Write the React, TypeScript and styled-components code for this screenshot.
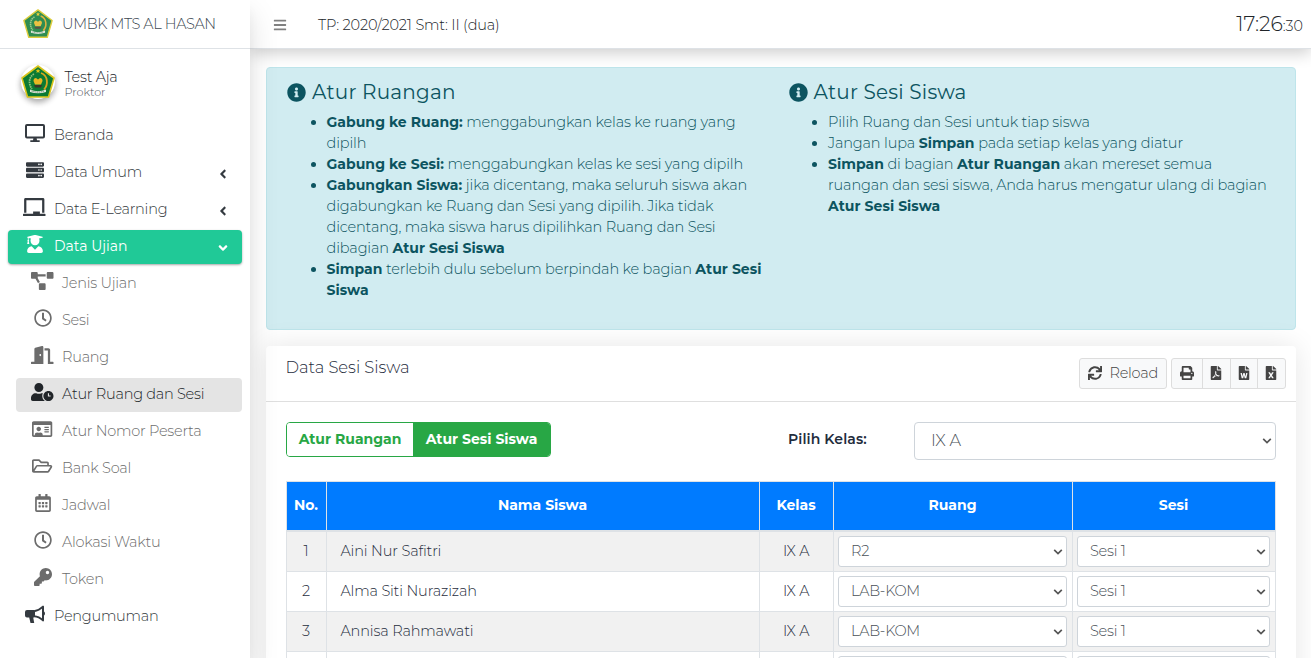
import React from 'react';
import styled, { createGlobalStyle, css } from 'styled-components';
import {
  FaServer, FaChalkboard, FaUserGraduate, FaProjectDiagram, FaRegClock, FaDoorOpen, FaUserClock,
  FaRegIdCard, FaRegFolderOpen, FaRegCalendarAlt, FaKey, FaInfoCircle, FaSync,
  FaPrint, FaFilePdf, FaFileWord, FaFileExcel, FaBars, FaAngleLeft, FaAngleDown,
} from 'react-icons/fa';

const Global = createGlobalStyle`
  *, *::before, *::after { box-sizing: border-box; }
  html, body { margin: 0; height: 100%; overflow: hidden; }
  body {
    font-family: Montserrat, "Open Sans", "Liberation Sans", sans-serif;
    font-size: 14.5px; font-weight: 300; line-height: 21px; letter-spacing: -0.25px;
    color: #212529; background: #fff;
  }
  svg { display: block; }
`;

const Page = styled.div`
  display: flex;
  height: 100vh;
  overflow: hidden;
`;

const Sidebar = styled.aside`
  flex: 0 0 250px;
  position: relative;
  z-index: 3;
  background: #fff;
  box-shadow: 0 14px 28px rgba(0, 0, 0, 0.13), 0 10px 10px rgba(0, 0, 0, 0.04);
`;

const Brand = styled.div`
  display: flex;
  align-items: center;
  height: 49px;
  padding-left: 23px;
  gap: 9px;
  border-bottom: 1px solid #dee2e6;
  color: #3d4852;
  letter-spacing: -0.36px;
  svg { opacity: 0.85; }
`;

const UserPanel = styled.div`
  display: flex;
  height: 70px;
  padding: 16px 0 0 20.5px;
  gap: 10px;
`;

const Avatar = styled.div`
  width: 34px;
  height: 34px;
  border-radius: 50%;
  background: #fff;
  box-shadow: 0 3px 6px rgba(0, 0, 0, 0.16), 0 3px 6px rgba(0, 0, 0, 0.23);
`;

const UserText = styled.div`
  padding-top: 4px;
  line-height: 16px;
  color: #212529;
  small { display: block; font-size: 11.2px; line-height: 14px; letter-spacing: 0; color: #495057; }
`;

const Nav = styled.nav`
  display: flex;
  flex-direction: column;
  gap: 3px;
  padding: 0 8px;
`;

const NavItem = styled.a<{ $sub?: boolean; $open?: boolean; $current?: boolean }>`
  display: flex;
  align-items: center;
  height: 34px;
  margin-left: ${p => (p.$sub ? 8 : 0)}px;
  padding: 0 15px 0 13px;
  border-radius: 4px;
  color: ${p => (p.$sub ? '#6c6c6c' : '#343a40')};
  ${p => p.$open && css`
    background: #20c997;
    color: #fff;
    font-weight: 400;
    font-size: 14px;
    letter-spacing: 0;
    box-shadow: 0 1px 3px rgba(0, 0, 0, 0.12), 0 1px 2px rgba(0, 0, 0, 0.24);
  `}
  ${p => p.$current && css`background: #e4e4e4; color: #212529;`}
`;

const NavIcon = styled.span<{ $w: number }>`
  display: flex;
  justify-content: center;
  width: 27px;
  margin: 0 6px 6px 0;
  svg { height: 18px; width: ${p => p.$w}px; flex: none; }
`;

const NavLabel = styled.span`
  flex: 1;
  padding-bottom: 1px;
`;

const NavArrow = styled.span`
  padding-top: 2px;
  margin-right: -2.5px;
  svg { width: 14px; height: 14px; }
`;

const Main = styled.div`
  flex: 1;
  min-width: 0;
  display: flex;
  flex-direction: column;
`;

const TopBar = styled.header`
  flex: none;
  position: relative;
  z-index: 2;
  display: flex;
  align-items: center;
  height: 49px;
  padding: 0 8px 0 23px;
  background: #fff;
  border-bottom: 1px solid #dee2e6;
  box-shadow: 0 4px 16px rgba(0, 0, 0, 0.2);
  > svg { width: 14px; height: 14px; margin-top: 1px; color: #808080; }
`;

const Period = styled.span`
  margin-left: 31px;
  padding-top: 3px;
  letter-spacing: -0.15px;
`;

const Clock = styled.div`
  margin-left: auto;
  padding-top: 2px;
  font-size: 20.4px;
  line-height: 30px;
  letter-spacing: 0;
  small { font-size: 14.3px; }
`;

const Content = styled.main`
  padding: 18px 15px 0 16px;
`;

const InfoBox = styled.section`
  display: grid;
  grid-template-columns: 486.5px 1fr;
  gap: 15px;
  height: 263px;
  padding: 12px 20px;
  border: 1px solid #bee5eb;
  border-radius: 4px;
  background: #d1ecf1;
  color: #0c5460;
`;

const InfoTitle = styled.h5`
  display: flex;
  align-items: center;
  gap: 6px;
  margin: 0 0 8px;
  font-size: 20px;
  font-weight: 400;
  line-height: 24px;
  letter-spacing: 0.2px;
  svg { width: 19px; height: 19px; }
`;

const InfoList = styled.ul`
  margin: 0;
  padding-left: 39.5px;
  letter-spacing: -0.16px;
  b { font-size: 14px; font-weight: 700; letter-spacing: 0.04px; }
`;

const Card = styled.section`
  margin-top: 16px;
  height: 500px;
  border-radius: 4px;
  background: #fff;
  box-shadow: 0 0 28px rgba(0, 0, 0, 0.1);
`;

const CardHeader = styled.div`
  display: flex;
  justify-content: space-between;
  height: 56px;
  padding: 12px 10px 12px 19.5px;
  border-bottom: 1px solid #dfdfdf;
`;

const CardTitle = styled.h3`
  margin: 0;
  font-size: 16.4px;
  font-weight: 300;
  line-height: 19px;
  letter-spacing: -0.03px;
  color: #1f2d3d;
`;

const Tools = styled.div`
  display: flex;
  gap: 4px;
`;

const ToolGroup = styled.div`
  display: flex;
  height: 31px;
  border: 1px solid #ddd;
  border-radius: 3px;
  background: #f8f9fa;
  color: #444;
`;

const ToolButton = styled.button<{ $w: number }>`
  display: flex;
  align-items: center;
  justify-content: center;
  gap: 7.5px;
  width: ${p => p.$w}px;
  padding: 0 0 1px;
  border: 0;
  background: none;
  color: inherit;
  font: inherit;
  letter-spacing: inherit;
  & + & { border-left: 1px solid #ddd; padding-right: 1px; }
  svg { width: 14px; height: 14px; }
`;

const CardBody = styled.div`
  padding: 20px;
`;

const Controls = styled.div`
  display: flex;
  height: 38px;
  margin-bottom: 21px;
`;

const Switch = styled.div`
  display: flex;
  width: 265px;
  height: 35px;
  border: 1px solid #28a745;
  border-radius: 4px;
  overflow: hidden;
`;

const SwitchButton = styled.button<{ $on?: boolean }>`
  flex: ${p => (p.$on ? '1' : '0 0 126px')};
  padding: 0 0 1px;
  border: 0;
  font: inherit;
  font-size: 14px;
  font-weight: 700;
  white-space: nowrap;
  background: ${p => (p.$on ? '#28a745' : '#fff')};
  color: ${p => (p.$on ? '#fff' : '#28a745')};
`;

const ClassLabel = styled.label`
  width: 126px;
  margin-left: 237px;
  padding-top: 7px;
  font-size: 14px;
  font-weight: 600;
  letter-spacing: 0.1px;
  color: #1f2d3d;
`;

const SelectBox = styled.div<{ $w: number }>`
  position: relative;
  width: ${p => p.$w}px;
  svg {
    position: absolute;
    right: 4px;
    top: 50%;
    margin-top: -3px;
    width: 10px;
    height: 6px;
    pointer-events: none;
  }
`;

const Select = styled.select<{ $large?: boolean }>`
  appearance: none;
  display: block;
  width: 100%;
  height: ${p => (p.$large ? 38 : 31)}px;
  padding: ${p => (p.$large ? '0 16px 2px' : '0 12px 2px')};
  border: 1px solid #ced4da;
  border-radius: ${p => (p.$large ? 4 : 3)}px;
  background: #fff;
  color: #495057;
  font-family: inherit;
  font-size: ${p => (p.$large ? 16.4 : 14.5)}px;
  font-weight: 300;
  letter-spacing: -0.25px;
`;

const Table = styled.table`
  width: 990px;
  table-layout: fixed;
  border-collapse: separate;
  border-spacing: 0;
  border-top: 1px solid #dee2e6;
  border-left: 1px solid #dee2e6;
  color: #1f2d3d;
`;

const HeadCell = styled.th<{ $w: number }>`
  width: ${p => p.$w}px;
  height: 50px;
  padding: 0 1px 1px 0;
  border-right: 1px solid #dee2e6;
  border-bottom: 2px solid #dee2e6;
  background: #007bff;
  color: #fff;
  font-size: 14px;
  font-weight: 700;
  letter-spacing: 0;
`;

const Row = styled.tr`
  &:nth-child(odd) { background: #f1f1f1; }
`;

const Cell = styled.td<{ $name?: boolean }>`
  height: 40px;
  padding: ${p => (p.$name ? '0 13.5px 1px' : '0 5px 0 4px')};
  border-right: 1px solid #dee2e6;
  border-bottom: 1px solid #dee2e6;
  text-align: ${p => (p.$name ? 'left' : 'center')};
  letter-spacing: ${p => (p.$name ? -0.14 : -0.25)}px;
`;

const Dropdown = ({ value, width, large }: { value: string; width: number; large?: boolean }) => (
  <SelectBox $w={width}>
    <Select $large={large}><option>{value}</option></Select>
    <svg viewBox="0 0 10 6"><path d="M1.200 .9 5 4.600 8.800 .9" fill="none" stroke="#555" strokeWidth="1.700" /></svg>
  </SelectBox>
);

const Emblem = ({ size }: { size: number }) => (
  <svg width={size} height={size} viewBox="0 0 34 34">
    <path d="M17 1 33 13 27.5 32H6.5L1 13Z" fill="#0b7a33" stroke="#d9c51c" strokeWidth="1.6" strokeLinejoin="round" />
    <path d="M13 9C8 11.500 7 19 11 24" fill="none" stroke="#8fc07c" strokeWidth="1.800" strokeDasharray="1.600 .7" />
    <path d="M20 8C27 10.500 27.500 19.500 23 24.500" fill="none" stroke="#d9a520" strokeWidth="1.800" />
    <path d="M17 3.500l.7 1.700h1.700l-1.300 1.100.5 1.700-1.600-1-1.600 1 .5-1.700-1.300-1.100h1.700Z" fill="#e6c619" />
    <path d="M12.500 16q0-3 2.500-3l2 1.500 2-1.500q2.500 0 2.500 3l-1.500 3.500h-6Z" fill="#e8b722" />
    <path d="M13 20h8l-1 2.500h-6Z" fill="#3c3428" />
    <path d="M9 24.500q8 3.500 16 0v2.500q-8 2.500-16 0Z" fill="#dfe8da" />
    <path d="M10.500 26q6.500 2.200 13 0" fill="none" stroke="#4f7b55" strokeWidth=".8" strokeDasharray="1.200 .7" />
  </svg>
);

const Monitor = () => (
  <svg viewBox="0 0 20 18" fill="none">
    <rect x="1" y="1" width="18" height="12.500" rx="1" stroke="currentColor" strokeWidth="2" />
    <path d="M8.500 13.500h3l.5 2.700h2.700V18H5.300v-1.800H8Z" fill="currentColor" />
  </svg>
);

const Megaphone = () => (
  <svg viewBox="0 0 20 18">
    <path d="M2 5h7v7.500H8.200L9.200 18H5.500L4.200 12.500H2Q0 12.500 0 10.500V7Q0 5 2 5Z" fill="currentColor" />
    <path d="M9 6.200Q14 5.500 18 1.600V15.400Q14 11.500 9 11.200Z" fill="none" stroke="currentColor" strokeWidth="2" strokeLinejoin="round" />
    <path d="M19 6.500q1 .6 1 2t-1 2Z" fill="currentColor" />
  </svg>
);

type Item = { icon: React.ReactNode; label: string; w?: number; sub?: boolean; open?: boolean; current?: boolean; arrow?: boolean };

const items: Item[] = [
  { icon: <Monitor />, label: 'Beranda', w: 20 },
  { icon: <FaServer />, label: 'Data Umum', arrow: true },
  { icon: <FaChalkboard />, label: 'Data E-Learning', w: 22.5, arrow: true },
  { icon: <FaUserGraduate />, label: 'Data Ujian', open: true },
  { icon: <FaProjectDiagram />, label: 'Jenis Ujian', w: 22.5, sub: true },
  { icon: <FaRegClock />, label: 'Sesi', sub: true },
  { icon: <FaDoorOpen />, label: 'Ruang', w: 22.5, sub: true },
  { icon: <FaUserClock />, label: 'Atur Ruang dan Sesi', w: 22.5, sub: true, current: true },
  { icon: <FaRegIdCard />, label: 'Atur Nomor Peserta', w: 20.25, sub: true },
  { icon: <FaRegFolderOpen />, label: 'Bank Soal', w: 20.25, sub: true },
  { icon: <FaRegCalendarAlt />, label: 'Jadwal', sub: true },
  { icon: <FaRegClock />, label: 'Alokasi Waktu', sub: true },
  { icon: <FaKey />, label: 'Token', sub: true },
  { icon: <Megaphone />, label: 'Pengumuman', w: 20 },
];

const students = [
  { name: 'Aini Nur Safitri', room: 'R2' },
  { name: 'Alma Siti Nurazizah', room: 'LAB-KOM' },
  { name: 'Annisa Rahmawati', room: 'LAB-KOM' },
  { name: '', room: '' },
];

export default function App() {
  return (
    <Page>
      <Global />
      <Sidebar>
        <Brand><Emblem size={30} />UMBK MTS AL HASAN</Brand>
        <UserPanel>
          <Avatar><Emblem size={34} /></Avatar>
          <UserText>Test Aja<small>Proktor</small></UserText>
        </UserPanel>
        <Nav>
          {items.map(it => (
            <NavItem key={it.label} $sub={it.sub} $open={it.open} $current={it.current}>
              <NavIcon $w={it.w ?? 18}>{it.icon}</NavIcon>
              <NavLabel>{it.label}</NavLabel>
              {it.arrow && <NavArrow><FaAngleLeft /></NavArrow>}
              {it.open && <NavArrow><FaAngleDown /></NavArrow>}
            </NavItem>
          ))}
        </Nav>
      </Sidebar>
      <Main>
        <TopBar>
          <FaBars />
          <Period>TP: 2020/2021 Smt: II (dua)</Period>
          <Clock>17:26<small>:30</small></Clock>
        </TopBar>
        <Content>
          <InfoBox>
            <div>
              <InfoTitle><FaInfoCircle />Atur Ruangan</InfoTitle>
              <InfoList>
                <li><b>Gabung ke Ruang:</b> menggabungkan kelas ke ruang yang dipilh</li>
                <li><b>Gabung ke Sesi:</b> menggabungkan kelas ke sesi yang dipilh</li>
                <li><b>Gabungkan Siswa:</b> jika dicentang, maka seluruh siswa akan digabungkan ke Ruang dan Sesi yang dipilih. Jika tidak dicentang, maka siswa harus dipilihkan Ruang dan Sesi dibagian <b>Atur Sesi Siswa</b></li>
                <li><b>Simpan</b> terlebih dulu sebelum berpindah ke bagian <b>Atur Sesi Siswa</b></li>
              </InfoList>
            </div>
            <div>
              <InfoTitle><FaInfoCircle />Atur Sesi Siswa</InfoTitle>
              <InfoList>
                <li>Pilih Ruang dan Sesi untuk tiap siswa</li>
                <li>Jangan lupa <b>Simpan</b> pada setiap kelas yang diatur</li>
                <li><b>Simpan</b> di bagian <b>Atur Ruangan</b> akan mereset semua ruangan dan sesi siswa, Anda harus mengatur ulang di bagian <b>Atur Sesi Siswa</b></li>
              </InfoList>
            </div>
          </InfoBox>
          <Card>
            <CardHeader>
              <CardTitle>Data Sesi Siswa</CardTitle>
              <Tools>
                <ToolGroup><ToolButton $w={86}><FaSync />Reload</ToolButton></ToolGroup>
                <ToolGroup>
                  <ToolButton $w={30}><FaPrint /></ToolButton>
                  <ToolButton $w={28}><FaFilePdf /></ToolButton>
                  <ToolButton $w={27}><FaFileWord /></ToolButton>
                  <ToolButton $w={28}><FaFileExcel /></ToolButton>
                </ToolGroup>
              </Tools>
            </CardHeader>
            <CardBody>
              <Controls>
                <Switch>
                  <SwitchButton>Atur Ruangan</SwitchButton>
                  <SwitchButton $on>Atur Sesi Siswa</SwitchButton>
                </Switch>
                <ClassLabel>Pilih Kelas:</ClassLabel>
                <Dropdown value="IX A" width={362} large />
              </Controls>
              <Table>
                <thead>
                  <tr>
                    <HeadCell $w={40}>No.</HeadCell>
                    <HeadCell $w={433}>Nama Siswa</HeadCell>
                    <HeadCell $w={74}>Kelas</HeadCell>
                    <HeadCell $w={239}>Ruang</HeadCell>
                    <HeadCell $w={203}>Sesi</HeadCell>
                  </tr>
                </thead>
                <tbody>
                  {students.map((s, i) => (
                    <Row key={i}>
                      <Cell>{s.name && i + 1}</Cell>
                      <Cell $name>{s.name}</Cell>
                      <Cell>{s.name && 'IX A'}</Cell>
                      <Cell><Dropdown value={s.room} width={229} /></Cell>
                      <Cell><Dropdown value={s.room && 'Sesi 1'} width={193} /></Cell>
                    </Row>
                  ))}
                </tbody>
              </Table>
            </CardBody>
          </Card>
        </Content>
      </Main>
    </Page>
  );
}
